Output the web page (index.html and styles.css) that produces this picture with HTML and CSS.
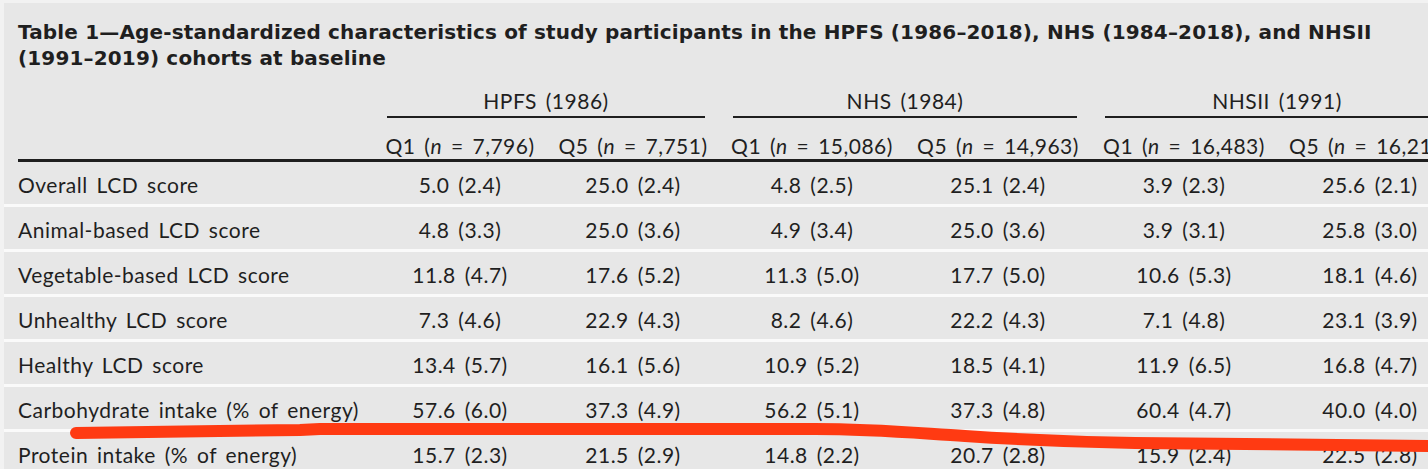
FILE: index.html
```html
<!DOCTYPE html>
<html lang="en">
<head>
<meta charset="utf-8">
<title>Table 1</title>
<link rel="stylesheet" href="styles.css">
</head>
<body>
<div class="page">
  <h1 class="title">Table 1—Age-standardized characteristics of study participants in the HPFS (1986–2018), NHS (1984–2018), and NHSII (1991–2019) cohorts at baseline</h1>
  <table class="tbl">
    <colgroup>
      <col class="c-label">
      <col class="c-h1"><col class="c-h5">
      <col class="c-n"><col class="c-n">
      <col class="c-n"><col class="c-n">
    </colgroup>
    <thead>
      <tr class="groups">
        <th></th>
        <th colspan="2"><div class="grp">HPFS (1986)</div></th>
        <th colspan="2"><div class="grp">NHS (1984)</div></th>
        <th colspan="2"><div class="grp">NHSII (1991)</div></th>
      </tr>
      <tr class="subs">
        <th class="lab"></th>
        <th>Q1 (<i>n</i> = 7,796)</th>
        <th>Q5 (<i>n</i> = 7,751)</th>
        <th>Q1 (<i>n</i> = 15,086)</th>
        <th>Q5 (<i>n</i> = 14,963)</th>
        <th>Q1 (<i>n</i> = 16,483)</th>
        <th>Q5 (<i>n</i> = 16,213)</th>
      </tr>
    </thead>
    <tbody>
      <tr><td>Overall LCD score</td><td>5.0 (2.4)</td><td>25.0 (2.4)</td><td>4.8 (2.5)</td><td>25.1 (2.4)</td><td>3.9 (2.3)</td><td>25.6 (2.1)</td></tr>
      <tr><td>Animal-based LCD score</td><td>4.8 (3.3)</td><td>25.0 (3.6)</td><td>4.9 (3.4)</td><td>25.0 (3.6)</td><td>3.9 (3.1)</td><td>25.8 (3.0)</td></tr>
      <tr><td>Vegetable-based LCD score</td><td>11.8 (4.7)</td><td>17.6 (5.2)</td><td>11.3 (5.0)</td><td>17.7 (5.0)</td><td>10.6 (5.3)</td><td>18.1 (4.6)</td></tr>
      <tr><td>Unhealthy LCD score</td><td>7.3 (4.6)</td><td>22.9 (4.3)</td><td>8.2 (4.6)</td><td>22.2 (4.3)</td><td>7.1 (4.8)</td><td>23.1 (3.9)</td></tr>
      <tr><td>Healthy LCD score</td><td>13.4 (5.7)</td><td>16.1 (5.6)</td><td>10.9 (5.2)</td><td>18.5 (4.1)</td><td>11.9 (6.5)</td><td>16.8 (4.7)</td></tr>
      <tr><td>Carbohydrate intake (% of energy)</td><td>57.6 (6.0)</td><td>37.3 (4.9)</td><td>56.2 (5.1)</td><td>37.3 (4.8)</td><td>60.4 (4.7)</td><td>40.0 (4.0)</td></tr>
      <tr><td>Protein intake (% of energy)</td><td>15.7 (2.3)</td><td>21.5 (2.9)</td><td>14.8 (2.2)</td><td>20.7 (2.8)</td><td>15.9 (2.4)</td><td>22.5 (2.8)</td></tr>
    </tbody>
  </table>
  <svg class="marker" width="1428" height="469" viewBox="0 0 1428 469" aria-hidden="true">
    <path d="M76 433 C 140 432, 230 431, 300 430 L 320 429 L 815 429 C 875 429, 915 433, 965 436 C 1025 440, 1075 442, 1135 443 L 1440 446" fill="none" stroke="#ff3a12" stroke-width="12" stroke-linecap="round" stroke-linejoin="round"/>
  </svg>
</div>
</body>
</html>
```

FILE: styles.css
```css
html, body {
  margin: 0;
  padding: 0;
}
body {
  width: 1428px;
  height: 469px;
  overflow: hidden;
  background: #e7e7e7;
}
.page {
  position: relative;
  height: 466px;
  border-top: 3px solid #f2f2f2;
  border-left: 4px solid #f2f2f2;
  color: #1f1f1f;
  font-family: "Lato", "Open Sans", sans-serif;
}
.title {
  margin: 0;
  padding: 16px 0 0 14px;
  font-family: "DejaVu Sans", sans-serif;
  font-weight: bold;
  font-size: 20px;
  line-height: 26px;
  letter-spacing: 0.15px;
  width: 1400px;
}
.tbl {
  margin-top: 17px;
  border-collapse: separate;
  border-spacing: 0;
  width: 1459px;
  table-layout: fixed;
  font-size: 21px;
  letter-spacing: 0.5px;
  word-spacing: 3px;
}
.c-label { width: 369px; }
.c-h1 { width: 174px; }
.c-h5 { width: 172px; }
.c-n { width: 186px; }
.tbl th {
  font-weight: normal;
  padding: 0;
  white-space: nowrap;
}
.groups th {
  padding: 0 14px;
}
.grp {
  line-height: 26px;
  padding-bottom: 2px;
  border-bottom: 2px solid #1f1f1f;
  text-align: center;
}
.subs th {
  line-height: 26px;
  padding: 15px 0 0;
  border-bottom: 3px solid #1f1f1f;
  text-align: center;
}
.subs th.lab {
  border-bottom-color: transparent;
  background: linear-gradient(#1f1f1f, #1f1f1f) no-repeat 14px 100% / calc(100% - 14px) 3px;
  background-origin: border-box;
  background-clip: border-box;
}
.tbl td {
  height: 38px;
  padding: 4px 0 0;
  line-height: 38px;
  text-align: center;
  white-space: nowrap;
  border-bottom: 3px solid #fafafa;
}
.tbl td:first-child {
  text-align: left;
  padding-left: 14px;
}
.marker {
  position: absolute;
  left: -4px;
  top: -3px;
}
```
